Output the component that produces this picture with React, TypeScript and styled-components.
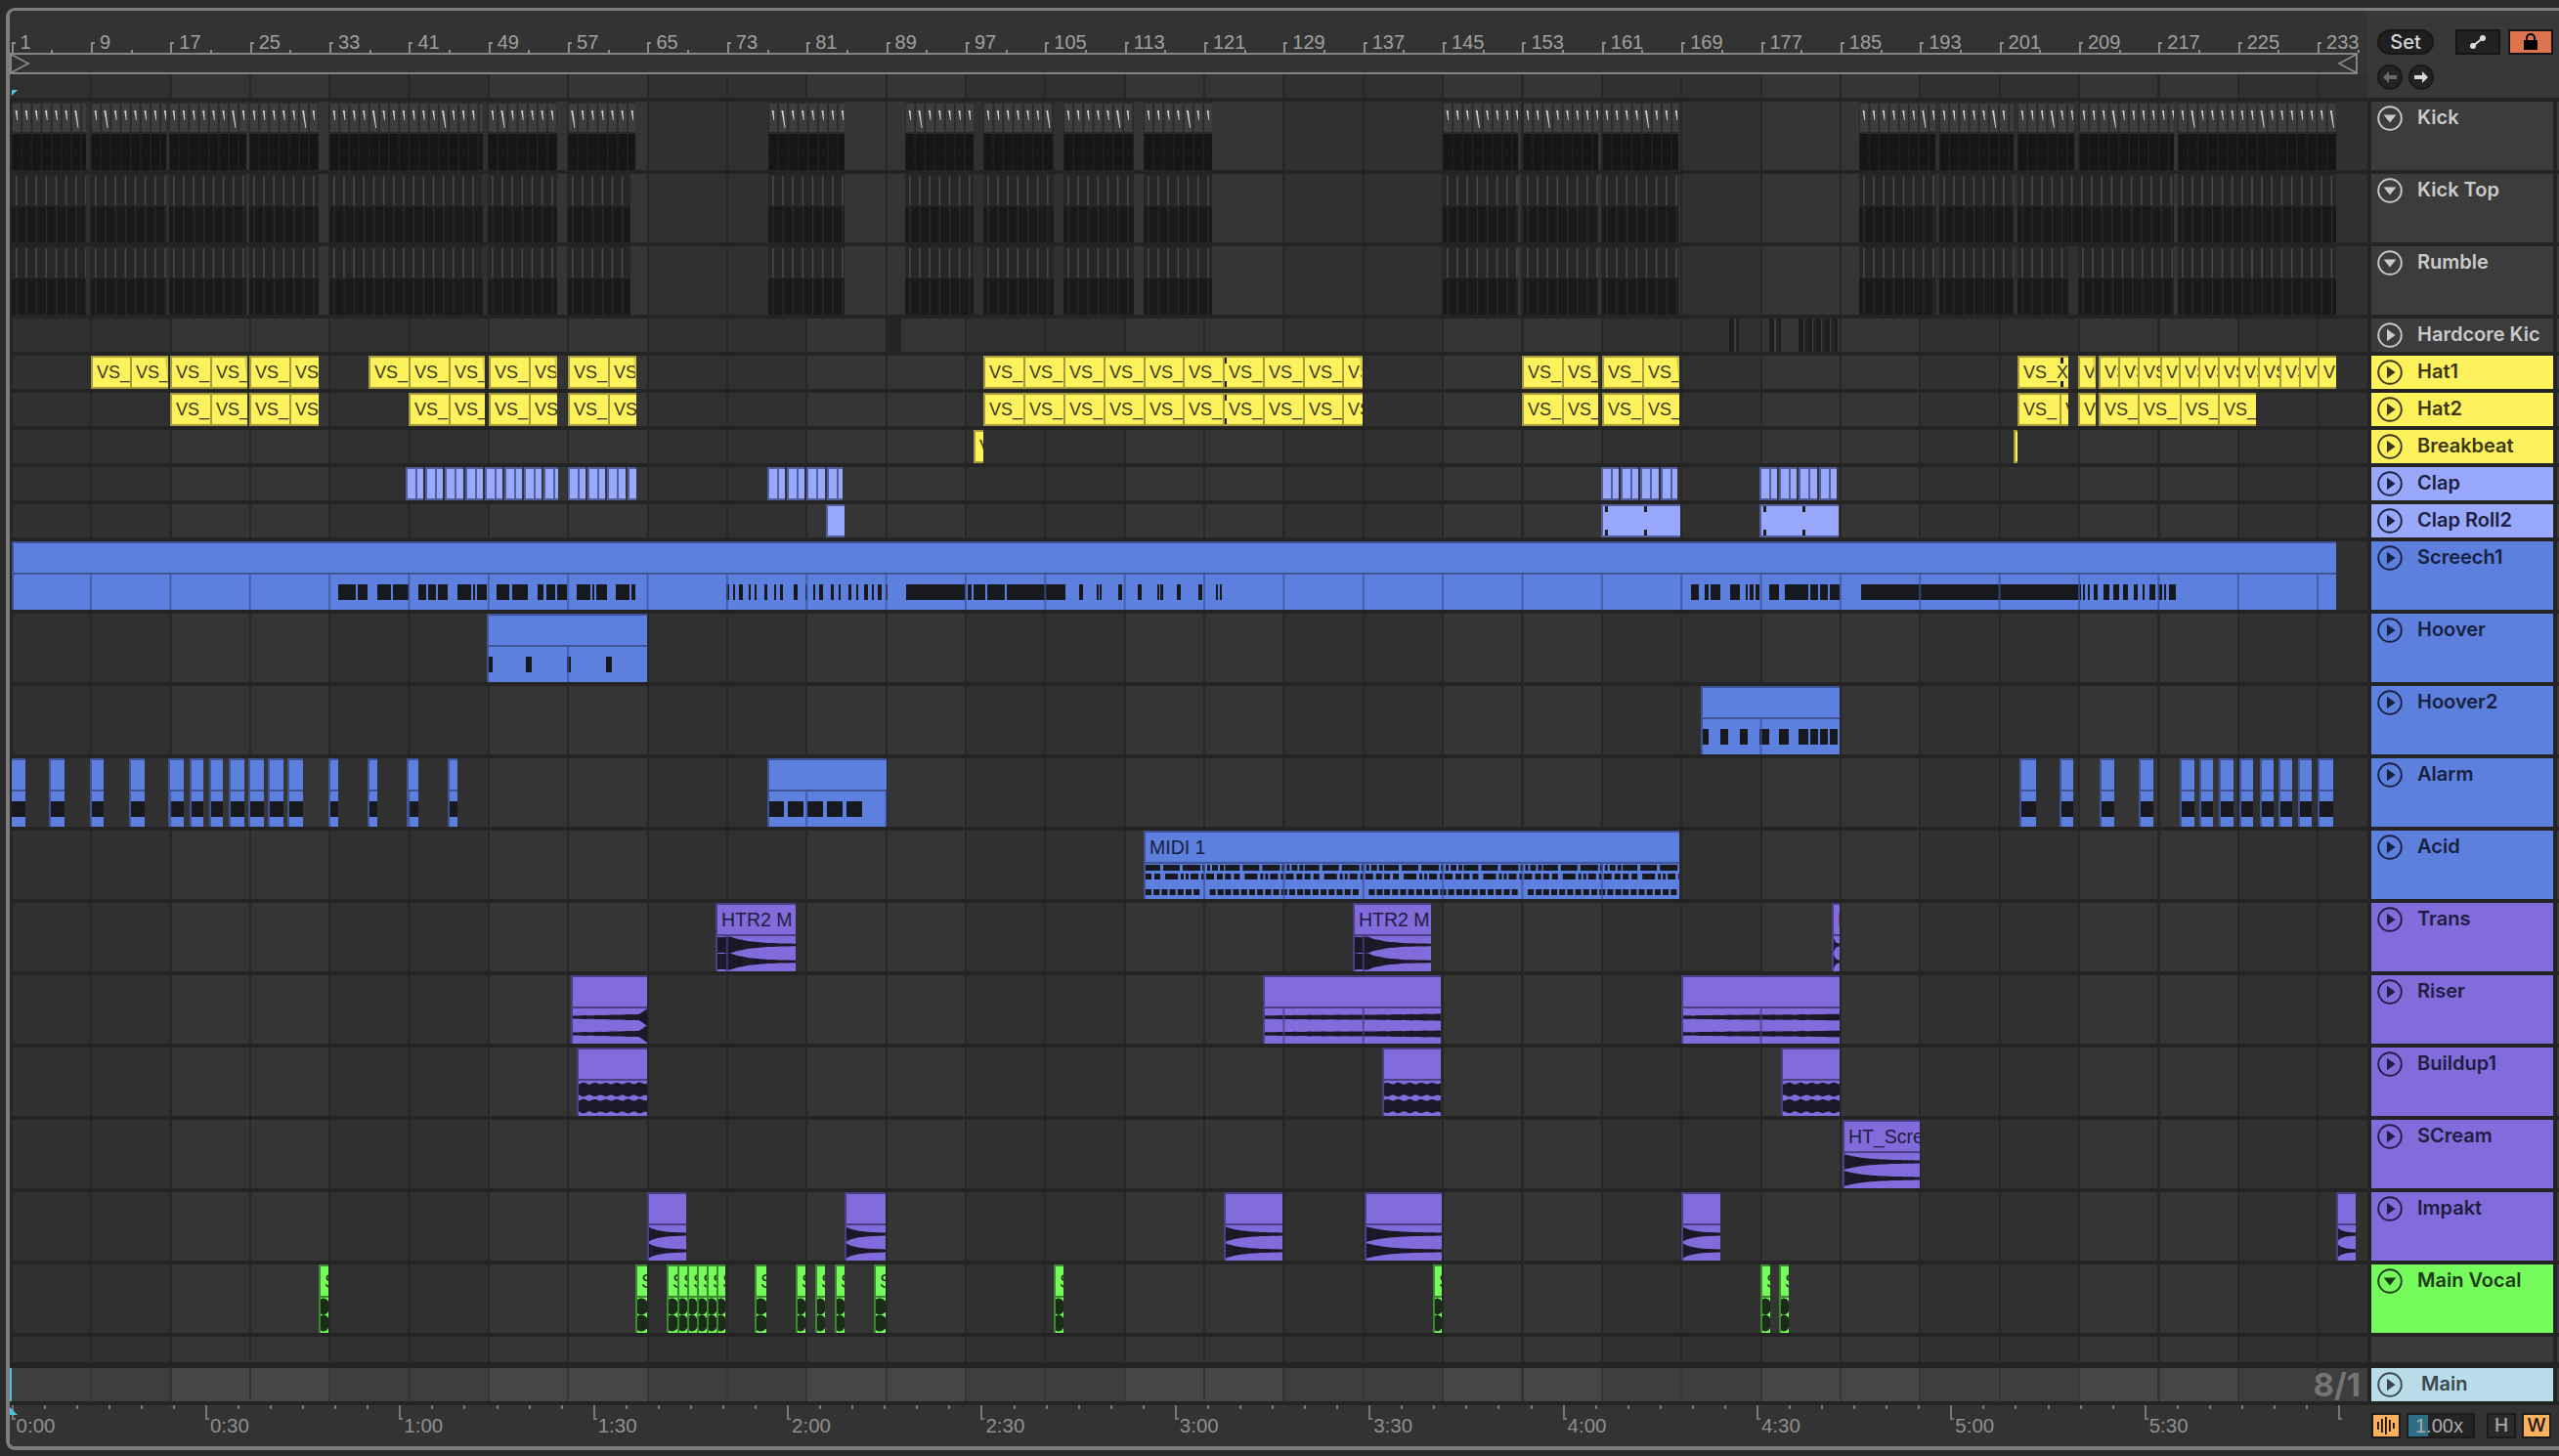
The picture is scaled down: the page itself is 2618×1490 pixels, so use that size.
import React from "react";
import styled, { createGlobalStyle } from "styled-components";

const GlobalStyle = createGlobalStyle`
    html, body {
        margin: 0;
        padding: 0;
        background: #2a2a2a;
        overflow: hidden;
    }
`;

/* ---------- palette ---------- */

type Tone = "yellow" | "clap" | "blue" | "purple" | "green";

const tones: Record<Tone, { fill: string; edge: string; ink: string; wave: string }> = {
    yellow: { fill: "#fdf15c", edge: "#a39b3c", ink: "#3a3813", wave: "#26240c" },
    clap: { fill: "#98a8fb", edge: "#535e9c", ink: "#1d2040", wave: "#1b1c26" },
    blue: { fill: "#5d7fde", edge: "#3e5497", ink: "#18203f", wave: "#18191f" },
    purple: { fill: "#826cdb", edge: "#4b3f87", ink: "#211c42", wave: "#1b1828" },
    green: { fill: "#75fc5c", edge: "#3b8a30", ink: "#1c3a16", wave: "#1a2b17" },
};

const GRID = 81.36;
const LANE_X = 12;
const UI = `"Liberation Sans", Arial, sans-serif`;
const HEAD = `Inter, "Liberation Sans", sans-serif`;

/* ---------- frame ---------- */

const Frame = styled.div`
    box-sizing: content-box;
    margin: 8px 0 0 6px;
    width: 2608px;
    height: 1469px;
    border-left: 4px solid #7d7d7d;
    border-top: 3px solid #7d7d7d;
    border-bottom: 4px solid #7d7d7d;
    border-radius: 9px 0 0 9px;
    background: #242424;
    overflow: hidden;
    display: flex;
    flex-direction: column;
    gap: 4px;
`;

const Row = styled.div<{ $h: number; $push?: number }>`
    display: flex;
    gap: 4px;
    height: ${(p) => p.$h}px;
    margin-top: ${(p) => p.$push || 0}px;
    padding-left: 2px;
    flex: none;
`;

const Lane = styled.div<{ $main?: boolean }>`
    position: relative;
    width: 2410px;
    flex: none;
    overflow: hidden;
    background:
        repeating-linear-gradient(
            90deg,
            ${(p) => (p.$main ? "#363636" : "#272727")} 0 0.8px,
            transparent 0.8px 80px,
            ${(p) => (p.$main ? "#363636" : "#272727")} 80px ${GRID}px
        ),
        repeating-linear-gradient(
            90deg,
            ${(p) => (p.$main ? "#3e3e3e" : "#303030")} 0 ${GRID * 2}px,
            ${(p) => (p.$main ? "#464646" : "#353535")} ${GRID * 2}px ${GRID * 4}px
        );
    ${(p) => p.$main && "box-shadow: -2px 0 0 #4fc3dc;"}
`;

const TrackHead = styled.div<{ $bg?: string; $ink?: string }>`
    width: 186px;
    flex: none;
    box-sizing: border-box;
    padding: 4px 0 0 6px;
    background: ${(p) => p.$bg || "#3c3c3c"};
    color: ${(p) => p.$ink || "#cbcbcb"};
    display: flex;
    align-items: flex-start;
    gap: 15px;
`;

const TrackName = styled.span<{ $shift?: boolean }>`
    font: 600 20px/25px ${HEAD};
    white-space: nowrap;
    overflow: hidden;
    margin-left: ${(p) => (p.$shift ? 4 : 0)}px;
`;

const Sliver = styled.div`
    width: 2px;
    flex: none;
    background: #3a3a3a;
`;

/* ---------- top bar ---------- */

const TopRow = styled.div`
    display: flex;
    height: 89px;
    flex: none;
    background: #333333;
`;

const Overview = styled.div`
    width: 2412px;
    flex: none;
    display: flex;
    flex-direction: column;
    overflow: hidden;
`;

const Ruler = styled.div`
    display: flex;
    height: 43px;
    flex: none;
    padding-left: 1.6px;
    overflow: hidden;
`;

const BarCell = styled.div`
    position: relative;
    width: ${GRID}px;
    flex: none;
    box-sizing: border-box;
    padding: 20px 0 0 9px;
    font: 400 20px/24px ${UI};
    color: #a0a0a0;
    &::before {
        content: "";
        position: absolute;
        left: 0;
        bottom: 0;
        width: 4px;
        height: 11px;
        border-left: 2px solid #8c8c8c;
        border-top: 2px solid #8c8c8c;
        box-sizing: border-box;
    }
    &::after {
        content: "";
        position: absolute;
        left: 40.7px;
        bottom: 0;
        width: 2px;
        height: 3px;
        background: #8c8c8c;
    }
`;

const Brace = styled.div`
    position: relative;
    height: 18px;
    margin-right: 10px;
    flex: none;
    box-sizing: content-box;
    border: 2px solid #858585;
`;

const BraceMark = styled.svg<{ $side: "left" | "right" }>`
    position: absolute;
    top: -1px;
    ${(p) => p.$side}: -1px;
`;

const TickLane = styled(Lane)`
    flex: 1;
    margin-left: 2px;
`;

const Marker = styled.svg<{ $bottom?: boolean }>`
    position: absolute;
    left: -2px;
    ${(p) => (p.$bottom ? "top: 2px;" : "bottom: 0;")}
`;

const Controls = styled.div`
    flex: 1;
    box-sizing: border-box;
    padding: 19px 0 0 10px;
    background: #383838;
    display: flex;
    flex-direction: column;
    gap: 10px;
`;

const ControlLine = styled.div`
    display: flex;
    align-items: center;
`;

const SetButton = styled.div`
    width: 58px;
    height: 26px;
    box-sizing: border-box;
    border-radius: 13px;
    background: #1f1f1f;
    border: 2px solid #171717;
    color: #d6d6d6;
    font: 500 20px/22px ${HEAD};
    text-align: center;
    margin-right: 22px;
`;

const SquareButton = styled.div<{ $bg: string }>`
    width: 46px;
    height: 26px;
    box-sizing: border-box;
    background: ${(p) => p.$bg};
    border: 2px solid #151515;
    display: flex;
    align-items: center;
    justify-content: center;
    margin-right: 8px;
`;

const RoundButton = styled.div`
    width: 26px;
    height: 26px;
    box-sizing: border-box;
    border-radius: 50%;
    background: #242424;
    border: 2px solid #191919;
    display: flex;
    align-items: center;
    justify-content: center;
    margin-right: 6px;
`;

/* ---------- clips ---------- */

const ClipBox = styled.div<{ $tone: Tone; $closed?: boolean }>`
    position: absolute;
    top: 0;
    height: 100%;
    box-sizing: border-box;
    overflow: hidden;
    background: ${(p) => tones[p.$tone].fill};
    color: ${(p) => tones[p.$tone].ink};
    border-left: 2px solid ${(p) => tones[p.$tone].edge};
    border-top: 2px solid ${(p) => tones[p.$tone].edge};
    border-bottom: ${(p) => (p.$closed ? `2px solid ${tones[p.$tone].edge}` : "none")};
    display: flex;
    flex-direction: column;
`;

const ClipTitle = styled.div<{ $tone: Tone }>`
    height: 30px;
    flex: none;
    padding-left: 4px;
    font: 400 ${(p) => (p.$tone === "yellow" ? 18 : 19.5)}px/30px ${UI};
    white-space: nowrap;
    box-sizing: border-box;
`;

const ClipRule = styled.div<{ $tone: Tone }>`
    height: 2px;
    flex: none;
    background: ${(p) => tones[p.$tone].edge};
`;

const ClipBody = styled.svg`
    display: block;
    flex: 1;
    width: 100%;
    min-height: 0;
`;

const Fold = styled.div`
    position: absolute;
    top: 0;
    right: 0;
    bottom: 0;
    width: 7px;
    background: #d4ca4e;
    clip-path: polygon(100% 0, 100% 100%, 60% 0);
`;

const Notch = styled.div<{ $at: "top" | "bottom" }>`
    position: absolute;
    ${(p) => p.$at}: 0;
    width: 3px;
    height: 6px;
    background: #1f1f1c;
`;

const InnerRule = styled.div<{ $tone: Tone }>`
    position: absolute;
    top: 0;
    bottom: 0;
    width: 2px;
    background: ${(p) => tones[p.$tone].edge};
`;

const Ghost = styled.div<{ $striped?: boolean }>`
    position: absolute;
    top: 0;
    height: 100%;
    background: ${(p) =>
        p.$striped
            ? "repeating-linear-gradient(90deg, #1f1f1f 0 5px, #3e3e3e 5px 6.5px, #262626 6.5px 9px)"
            : "#242424"};
`;

const DrumSvg = styled.svg`
    position: absolute;
    top: 0;
    height: 100%;
    display: block;
`;

const Overlay = styled.div`
    position: absolute;
    right: 7px;
    top: 0;
    font: 700 33px/34px ${HEAD};
    color: #757575;
`;

/* ---------- bottom bar ---------- */

const BottomRow = styled.div`
    display: flex;
    height: 42px;
    flex: none;
    background: #333333;
`;

const TimeRuler = styled.div`
    width: 2412px;
    flex: none;
    display: flex;
    padding-left: 1.6px;
    box-sizing: border-box;
    overflow: hidden;
    position: relative;
`;

const TimeCell = styled.div<{ $major?: boolean }>`
    position: relative;
    width: 33.07px;
    flex: none;
    font: 400 20.5px/24px ${UI};
    color: #8f8f8f;
    white-space: nowrap;
    padding-top: 9px;
    box-sizing: border-box;
    &::before {
        content: "";
        position: absolute;
        left: 0;
        top: 0;
        box-sizing: border-box;
        width: ${(p) => (p.$major ? 4 : 2)}px;
        height: ${(p) => (p.$major ? 15 : 4)}px;
        border-left: 2px solid #777;
        border-bottom: ${(p) => (p.$major ? "2px solid #777" : "none")};
    }
`;

const TimeLabel = styled.span`
    padding-left: 5px;
`;

const BottomTools = styled.div`
    flex: 1;
    display: flex;
    padding: 8px 0 0 4px;
    box-sizing: border-box;
    background: #333333;
`;

const ToolButton = styled.div<{ $on?: boolean; $gap: number }>`
    width: 30px;
    height: 26px;
    box-sizing: border-box;
    border: 2px solid #1b1b1b;
    background: ${(p) => (p.$on ? "#fab15e" : "#2b2b2b")};
    color: ${(p) => (p.$on ? "#1b1208" : "#a8a8a8")};
    font: 500 19px/22px ${HEAD};
    text-align: center;
    margin-right: ${(p) => p.$gap}px;
    display: flex;
    align-items: center;
    justify-content: center;
`;

const SpeedField = styled.div`
    position: relative;
    width: 70px;
    height: 26px;
    box-sizing: border-box;
    border: 2px solid #1b1b1b;
    background: linear-gradient(90deg, #2e6f86 0 20px, #242424 20px);
    color: #adadad;
    font: 400 20px/22px ${UI};
    padding-left: 7px;
    margin-right: 12px;
`;

/* ---------- drawn bits ---------- */

const HeadIcon = ({ open, color }: { open: boolean; color: string }) => (
    <svg width="26" height="26" viewBox="0 0 26 26" style={{ flex: "none" }}>
        <circle cx="13" cy="13" r="11.8" fill="none" stroke={color} strokeWidth="1.9" />
        {open ? (
            <polygon points="6.6,9.6 19.4,9.6 13,17.6" fill={color} />
        ) : (
            <polygon points="10,6.8 18.6,13 10,19.2" fill={color} />
        )}
    </svg>
);

const noise = (n: number) => Math.sin(n * 12.9898) * 0.5 + Math.sin(n * 4.1414) * 0.5;

const channel = (x0: number, x1: number, cy: number, amp: (t: number, x: number) => number) => {
    let up = "";
    let down = "";
    for (let x = x0; x <= x1 + 1; x += 1.5) {
        const a = Math.max(0.4, amp((x - x0) / (x1 - x0), x));
        up += `${up ? "L" : "M"}${x.toFixed(1)} ${(cy - a).toFixed(1)}`;
        down = `L${x.toFixed(1)} ${(cy + a).toFixed(1)}` + down;
    }
    return up + down + "Z";
};

type Shape =
    | { kind: "slabs"; items: number[][] }
    | { kind: "midi" }
    | { kind: "env"; amp: (t: number, x: number) => number };

const acidRows = (x0: number, x1: number) => {
    const rects: number[][] = [];
    for (let b = 0; b * GRID + 1170 < x1; b++) {
        const o = 1172 + b * GRID;
        const r1 = [[0, 15], [18, 17], [38, 18], [58, 3], [63, 3], [68, 6], [76, 4]];
        r1.forEach(([a, w]) => rects.push([o + a, 1, w]));
        const r2 = [[0, 6], [9, 6], [20, 13], [36, 3], [41, 3], [46, 8], [57, 3], [62, 8], [73, 6]];
        r2.forEach(([a, w]) => rects.push([o + a, 10, w]));
        for (let i = 0; i < 10; i++) {
            if (i === 7 && b % 2 === 0) continue;
            rects.push([o + i * 8.2, 26, 6]);
        }
    }
    return rects.filter((r) => r[0] < x1 && r[0] >= x0);
};

const Wave = ({ x0, x1, tone, shape }: { x0: number; x1: number; tone: Tone; shape: Shape }) => {
    const c = tones[tone];
    const lines: number[] = [];
    for (let k = 0; k < 30; k++) {
        const gx = 93 + GRID * k;
        if (gx > x0 + 2 && gx < x1) lines.push(gx);
    }
    return (
        <ClipBody viewBox={`${x0 + 2} 0 ${x1 - x0 - 2} 36`} preserveAspectRatio="none">
            {shape.kind === "slabs" &&
                shape.items.map(([a, b], i) => (
                    <rect key={i} x={a} y="10" width={b - a} height="16" fill={c.wave} />
                ))}
            {shape.kind === "midi" &&
                acidRows(x0, x1).map(([x, y, w], i) => (
                    <rect key={i} x={x} y={y} width={w} height="6" fill={c.wave} />
                ))}
            {shape.kind === "env" && (
                <>
                    <path d={channel(x0, x1, 9, shape.amp)} fill={c.wave} />
                    <path d={channel(x0, x1, 26, shape.amp)} fill={c.wave} />
                </>
            )}
            {lines.map((gx) => (
                <rect key={gx} x={gx - 1} y="0" width="2" height="36" fill={c.edge} opacity="0.75" />
            ))}
        </ClipBody>
    );
};

const Clip = ({ x0, x1, tone, title, shape, closed, fold, children }: {
    x0: number;
    x1: number;
    tone: Tone;
    title?: string;
    shape?: Shape;
    closed?: boolean;
    fold?: boolean;
    children?: React.ReactNode;
}) => (
    <ClipBox $tone={tone} $closed={closed} style={{ left: x0 - LANE_X, width: x1 - x0 }}>
        <ClipTitle $tone={tone}>{title}</ClipTitle>
        {shape && <ClipRule $tone={tone} />}
        {shape && <Wave x0={x0} x1={x1} tone={tone} shape={shape} />}
        {fold && <Fold />}
        {children}
    </ClipBox>
);

const DrumClip = ({ x0, x1, kick }: { x0: number; x1: number; kick: boolean }) => {
    const cells: React.ReactNode[] = [];
    let k = 0;
    const w = x1 - x0;
    for (let x = 1; x < w; x += 10.17, k++) {
        const cw = Math.min(8.2, w - x);
        const long = (Math.round(x0) + k * 5) % 7 === 0;
        cells.push(
            kick ? (
                <g key={k}>
                    <rect x={x} y="2" width={cw} height="29" fill="#3d3d3d" />
                    <rect x={x} y="33" width={cw} height="37" fill="#161616" />
                    <rect x={x + 2} y="50" width={Math.max(0, cw - 4)} height="2" fill="#1d1d1d" />
                    {x + 4 < w && (
                        <polygon
                            points={
                                long
                                    ? `${x + 2.2},9 ${x + 4.2},9 ${x + 6.4},27 ${x + 5.6},27`
                                    : `${x + 2.6},9 ${x + 4.6},9 ${x + 5.1},19 ${x + 4.4},19`
                            }
                            fill="#d2d2d2"
                        />
                    )}
                </g>
            ) : (
                <g key={k}>
                    <rect x={x + 3} y="2" width="1.6" height="30" fill="#494949" />
                    <rect x={x - 1} y="34" width={Math.min(5, w - x)} height="36" fill="#1a1a1a" />
                    <rect x={x + 5.5} y="34" width={Math.min(4.5, Math.max(0, w - x - 5.5))} height="36" fill="#1a1a1a" />
                    <rect x={x + 3.4} y="34" width="0.9" height="36" fill="#2e2e2e" />
                </g>
            ),
        );
    }
    return (
        <DrumSvg style={{ left: x0 - LANE_X, width: w }} viewBox={`0 0 ${w} 70`} preserveAspectRatio="none">
            <rect x="0" y="0" width={w} height="33" fill={kick ? "#2a2a2a" : "#272727"} />
            <rect x="0" y="33" width={w} height="37" fill="#1f1f1f" />
            {cells}
        </DrumSvg>
    );
};

/* ---------- track data ---------- */

// groups of abutting clips: list of starts, last number is where the group ends
const VS_GROUPS_1 = [
    [93, 133, 172], [174, 215, 253], [255, 296, 326], [377, 418, 459, 496], [500, 541, 570], [581, 622, 651],
    [1006, 1047, 1088, 1129, 1170, 1210, 1251, 1292, 1333, 1373, 1394],
    [1557, 1598, 1635], [1639, 1680, 1718],
];
const VS_GROUPS_2 = [
    [174, 215, 253], [255, 296, 326], [418, 459, 496], [500, 541, 570], [581, 622, 651],
    [1006, 1047, 1088, 1129, 1170, 1210, 1251, 1292, 1333, 1373, 1394],
    [1557, 1598, 1635], [1639, 1680, 1718],
    [2064, 2107, 2116], [2126, 2144], [2147, 2187, 2230, 2269, 2308],
];

const HatClips = ({ groups, folds }: { groups: number[][]; folds?: boolean }) => (
    <>
        {groups.map((g) =>
            g.slice(0, -1).map((x, i) => (
                <Clip
                    key={x}
                    x0={x}
                    x1={g[i + 1]}
                    tone="yellow"
                    title="VS_"
                    closed
                    fold={folds && i === g.length - 2 && x !== 296}
                >
                    {x === 1251 && <Notch $at="top" style={{ left: -1 }} />}
                    {x === 1251 && <Notch $at="bottom" style={{ left: -1 }} />}
                </Clip>
            )),
        )}
    </>
);

const CLAP_GROUPS = [[415, 571], [581, 651], [785, 862], [1638, 1716], [1800, 1880]];

const ClapClips = () => (
    <>
        {CLAP_GROUPS.map(([a, b]) => {
            const items = [];
            for (let x = a; x < b - 2; x += 20.2) items.push(x);
            return items.map((x) => (
                <Clip key={x} x0={x} x1={Math.min(x + 18.2, b)} tone="clap" closed>
                    <InnerRule $tone="clap" style={{ left: 8 }} />
                </Clip>
            ));
        })}
    </>
);

const SCREECH_SLABS = [
    [346, 364], [366, 376], [386, 400], [402, 418], [428, 436], [438, 446], [448, 458], [468, 482], [484, 486],
    [488, 498], [508, 521], [524, 540], [550, 556], [559, 568], [570, 580], [590, 604], [606, 608], [610, 621],
    [630, 644], [646, 650],
    [743, 746], [750, 752], [756, 760], [766, 768], [772, 774], [782, 785], [792, 794], [798, 801], [812, 816],
    [824, 826], [832, 834], [838, 842], [850, 853], [858, 860], [868, 871], [876, 878], [884, 888], [892, 894],
    [898, 902], [906, 908],
    [927, 988], [990, 994], [996, 1008], [1010, 1028], [1030, 1090], [1104, 1108], [1122, 1124], [1125, 1127],
    [1144, 1148], [1164, 1168], [1184, 1186], [1187, 1190], [1204, 1208], [1226, 1230], [1244, 1246], [1248, 1250],
    [1730, 1738], [1744, 1748], [1750, 1760], [1770, 1780], [1786, 1788], [1790, 1794], [1796, 1800],
    [1810, 1820], [1826, 1850], [1852, 1860], [1862, 1870], [1872, 1882],
    [1904, 2129], [2131, 2133], [2136, 2138], [2142, 2146], [2152, 2158], [2162, 2168], [2172, 2177], [2183, 2187],
    [2192, 2194], [2199, 2205], [2208, 2212], [2214, 2216], [2219, 2226],
];

const HOOVER_SLABS = [[500, 504], [538, 544], [580, 584], [620, 626]];
const HOOVER2_SLABS = [
    [1742, 1748], [1760, 1768], [1780, 1788], [1800, 1810], [1820, 1830], [1840, 1850], [1852, 1860], [1862, 1870],
    [1872, 1880],
];

const ALARM_CLIPS = [
    [10, 26], [50, 66], [92, 106], [132, 148], [172, 188], [194, 208], [214, 228], [234, 250], [254, 270], [274, 290],
    [294, 310], [336, 346], [376, 386], [416, 428], [458, 468],
    [2066, 2083], [2107, 2121], [2148, 2163], [2188, 2203], [2230, 2245], [2250, 2264], [2270, 2285], [2291, 2305],
    [2312, 2326], [2331, 2345], [2351, 2365], [2371, 2387],
];

const decay = (t: number) => 1.4 + 7 * Math.exp(-3.6 * t);
const hit = (t: number, x: number) => (t < 0.2 ? 8 + noise(x) * 0.6 : 1.2 + 6.8 * Math.exp(-4.5 * (t - 0.2)) + noise(x) * 0.25);
const swell = (t: number, x: number) => 6.4 + Math.sin(x * 0.55) * 0.9 + noise(x) * 0.3;
const thin = (t: number, x: number) => 1.7 + t * 1.6 + noise(x) * 0.25;
const rising = (t: number, x: number) => 1.6 + 1.6 * t + (t > 0.9 ? (t - 0.9) * 55 : 0) + noise(x) * 0.25;
const vocal = (t: number) => 8.4 * Math.pow(Math.max(0.02, Math.sin(Math.PI * (0.08 + t * 0.84))), 0.35);

const VOCAL_CLIPS = [
    [326, 336], [650, 662], [682, 693], [693, 703], [703, 713], [713, 723], [723, 733], [733, 742], [772, 784],
    [814, 824], [834, 844], [854, 864], [894, 906], [1078, 1088], [1466, 1475], [1801, 1811], [1820, 1830],
];

const Bar = ({ label }: { label: number }) => <BarCell>{label}</BarCell>;

const drumRanges = {
    kick: [
        [12, 88], [93, 170], [173, 252], [255, 326], [337, 494], [499, 570], [581, 650], [786, 864], [926, 996],
        [1006, 1078], [1088, 1160], [1170, 1240], [1476, 1553], [1558, 1635], [1639, 1717], [1902, 1980],
        [1984, 2060], [2064, 2122], [2127, 2224], [2228, 2390],
    ],
    top: [
        [12, 88], [93, 170], [173, 252], [255, 326], [337, 494], [499, 570], [581, 645], [786, 864], [926, 996],
        [1006, 1078], [1088, 1160], [1170, 1240], [1476, 1553], [1558, 1635], [1639, 1717], [1902, 1980],
        [1984, 2060], [2064, 2224], [2228, 2390],
    ],
    rumble: [
        [12, 88], [93, 170], [173, 252], [255, 326], [337, 494], [499, 570], [581, 645], [786, 864], [926, 996],
        [1006, 1078], [1088, 1160], [1170, 1240], [1476, 1553], [1558, 1635], [1639, 1717], [1902, 1980],
        [1984, 2060], [2064, 2116], [2126, 2224], [2228, 2390],
    ],
};

const Drums = ({ ranges, kick }: { ranges: number[][]; kick: boolean }) => (
    <>
        {ranges.map(([a, b]) => (
            <DrumClip key={a} x0={a} x1={b} kick={kick} />
        ))}
    </>
);

const Track = ({ name, h, tone, open, children, bg, ink, push }: {
    name?: string;
    h: number;
    tone?: Tone;
    open?: boolean;
    children?: React.ReactNode;
    bg?: string;
    ink?: string;
    push?: number;
}) => {
    const fill = bg || (tone ? tones[tone].fill : undefined);
    const text = ink || (tone ? tones[tone].ink : undefined);
    return (
        <Row $h={h} $push={push}>
            <Lane>{children}</Lane>
            <TrackHead $bg={fill} $ink={text}>
                {name && <HeadIcon open={!!open} color={text || "#cbcbcb"} />}
                {name && <TrackName>{name}</TrackName>}
            </TrackHead>
            <Sliver />
        </Row>
    );
};

const bars = Array.from({ length: 30 }, (_, i) => 1 + i * 8);
const times = Array.from({ length: 73 }, (_, i) => i);
const timeText = (i: number) => {
    const s = i * 5;
    return `${Math.floor(s / 60)}:${String(s % 60).padStart(2, "0")}`;
};

const purple = (x0: number, x1: number, amp: (t: number, x: number) => number, title?: string) => (
    <Clip key={x0} x0={x0} x1={x1} tone="purple" title={title} shape={{ kind: "env", amp }} />
);

export default function App() {
    return (
        <>
            <GlobalStyle />
            <Frame>
                <TopRow>
                    <Overview>
                        <Ruler>
                            {bars.map((b) => (
                                <Bar key={b} label={b} />
                            ))}
                        </Ruler>
                        <Brace>
                            <BraceMark $side="left" width="20" height="20" viewBox="0 0 20 20">
                                <path d="M1 1 L18 10 L1 19" fill="none" stroke="#8a8a8a" strokeWidth="1.6" />
                            </BraceMark>
                            <BraceMark $side="right" width="20" height="20" viewBox="0 0 20 20">
                                <path d="M19 1 L2 10 L19 19" fill="none" stroke="#8a8a8a" strokeWidth="1.6" />
                            </BraceMark>
                        </Brace>
                        <TickLane>
                            <Marker width="8" height="8" viewBox="0 0 8 8">
                                <polygon points="0,0 8,0 0,8" fill="#4fc3dc" />
                            </Marker>
                        </TickLane>
                    </Overview>
                    <Controls>
                        <ControlLine>
                            <SetButton>Set</SetButton>
                            <SquareButton $bg="#222222">
                                <svg width="18" height="16" viewBox="0 0 18 16">
                                    <line x1="4" y1="12" x2="14" y2="4" stroke="#dcdcdc" strokeWidth="2" />
                                    <circle cx="4" cy="12" r="3" fill="#dcdcdc" />
                                    <circle cx="14" cy="4" r="3" fill="#dcdcdc" />
                                </svg>
                            </SquareButton>
                            <SquareButton $bg="#dd7350">
                                <svg width="16" height="18" viewBox="0 0 16 18">
                                    <path d="M4 8V5a4 4 0 0 1 8 0v3" fill="none" stroke="#000" strokeWidth="2" />
                                    <rect x="1" y="7" width="14" height="10" fill="#000" />
                                </svg>
                            </SquareButton>
                        </ControlLine>
                        <ControlLine>
                            <RoundButton>
                                <svg width="16" height="14" viewBox="0 0 16 14">
                                    <path d="M1 7 L7 1 V5 H15 V9 H7 V13 Z" fill="#6a6a6a" />
                                </svg>
                            </RoundButton>
                            <RoundButton>
                                <svg width="16" height="14" viewBox="0 0 16 14">
                                    <path d="M15 7 L9 1 V5 H1 V9 H9 V13 Z" fill="#d8d8d8" />
                                </svg>
                            </RoundButton>
                        </ControlLine>
                    </Controls>
                </TopRow>

                <Track name="Kick" h={70} open>
                    <Drums ranges={drumRanges.kick} kick />
                </Track>
                <Track name="Kick Top" h={70} open>
                    <Drums ranges={drumRanges.top} kick={false} />
                </Track>
                <Track name="Rumble" h={70} open>
                    <Drums ranges={drumRanges.rumble} kick={false} />
                </Track>
                <Track name="Hardcore Kic" h={34}>
                    <Ghost style={{ left: 906 - LANE_X, width: 16 }} />
                    <Ghost $striped style={{ left: 1769 - LANE_X, width: 10 }} />
                    <Ghost $striped style={{ left: 1810 - LANE_X, width: 12 }} />
                    <Ghost $striped style={{ left: 1840 - LANE_X, width: 40 }} />
                </Track>
                <Track name="Hat1" h={34} tone="yellow">
                    <HatClips groups={VS_GROUPS_1} folds />
                    <Clip x0={2064} x1={2116} tone="yellow" title="VS_X" closed>
                        <Notch $at="top" style={{ left: 42 }} />
                        <Notch $at="bottom" style={{ left: 42 }} />
                    </Clip>
                    <Clip x0={2126} x1={2144} tone="yellow" title="V" closed fold />
                    {[2147, 2167, 2187, 2210, 2229, 2249, 2269, 2290, 2310, 2332, 2352, 2371].map((x, i, all) => (
                        <Clip key={x} x0={x} x1={all[i + 1] || 2390} tone="yellow" title="VS_" closed />
                    ))}
                </Track>
                <Track name="Hat2" h={34} tone="yellow">
                    <HatClips groups={VS_GROUPS_2} />
                </Track>
                <Track name="Breakbeat" h={34} tone="yellow">
                    <Clip x0={996} x1={1006} tone="yellow" title="VS_" closed />
                    <Clip x0={2060} x1={2063.5} tone="yellow" closed />
                </Track>
                <Track name="Clap" h={34} tone="clap">
                    <ClapClips />
                </Track>
                <Track name="Clap Roll2" h={34} tone="clap">
                    <Clip x0={845} x1={864} tone="clap" closed />
                    {[1638, 1800].map((x) => (
                        <Clip key={x} x0={x} x1={x + 81} tone="clap" closed>
                            <Notch $at="top" style={{ left: 2 }} />
                            <Notch $at="bottom" style={{ left: 2 }} />
                            <Notch $at="top" style={{ left: 42 }} />
                            <Notch $at="bottom" style={{ left: 42 }} />
                        </Clip>
                    ))}
                </Track>
                <Track name="Screech1" h={70} tone="blue">
                    <Clip x0={12} x1={2390} tone="blue" shape={{ kind: "slabs", items: SCREECH_SLABS }} />
                </Track>
                <Track name="Hoover" h={70} tone="blue">
                    <Clip x0={498} x1={662} tone="blue" shape={{ kind: "slabs", items: HOOVER_SLABS }} />
                </Track>
                <Track name="Hoover2" h={70} tone="blue">
                    <Clip x0={1740} x1={1882} tone="blue" shape={{ kind: "slabs", items: HOOVER2_SLABS }} />
                </Track>
                <Track name="Alarm" h={70} tone="blue">
                    {ALARM_CLIPS.map(([a, b]) => (
                        <Clip key={a} x0={a} x1={b} tone="blue" shape={{ kind: "slabs", items: [[a, b]] }} />
                    ))}
                    <Clip
                        x0={785}
                        x1={907}
                        tone="blue"
                        shape={{ kind: "slabs", items: [[787, 802], [806, 822], [826, 842], [846, 862], [866, 882]] }}
                    />
                </Track>
                <Track name="Acid" h={70} tone="blue">
                    <Clip x0={1170} x1={1718} tone="blue" title="MIDI 1" shape={{ kind: "midi" }} />
                </Track>
                <Track name="Trans" h={70} tone="purple">
                    {purple(732, 814, hit, "HTR2 M")}
                    {purple(1384, 1464, hit, "HTR2 M")}
                    {purple(1874, 1882, hit, "HTR2 M")}
                </Track>
                <Track name="Riser" h={70} tone="purple">
                    {purple(584, 662, rising)}
                    {purple(1292, 1474, thin)}
                    {purple(1720, 1882, thin)}
                </Track>
                <Track name="Buildup1" h={70} tone="purple">
                    {purple(590, 662, swell)}
                    {purple(1414, 1474, swell)}
                    {purple(1822, 1882, swell)}
                </Track>
                <Track name="SCream" h={70} tone="purple">
                    {purple(1885, 1964, decay, "HT_Scre")}
                </Track>
                <Track name="Impakt" h={70} tone="purple">
                    {[[662, 702], [864, 906], [1252, 1312], [1396, 1475], [1720, 1760], [2390, 2410]].map(([a, b]) =>
                        purple(a, b, decay),
                    )}
                </Track>
                <Track name="Main Vocal" h={70} tone="green" open>
                    {VOCAL_CLIPS.map(([a, b]) => (
                        <Clip key={a} x0={a} x1={b} tone="green" title="S" shape={{ kind: "env", amp: vocal }} />
                    ))}
                </Track>
                <Track h={26} bg="#3a3a3a" />
                <Row $h={34} $push={2}>
                    <Lane $main>
                        <Overlay>8/1</Overlay>
                    </Lane>
                    <TrackHead $bg="#b8dce8" $ink="#3b474c">
                        <HeadIcon open={false} color="#3b474c" />
                        <TrackName $shift>Main</TrackName>
                    </TrackHead>
                    <Sliver />
                </Row>
                <BottomRow>
                    <TimeRuler>
                        {times.map((i) => (
                            <TimeCell key={i} $major={i % 6 === 0}>
                                {i % 6 === 0 && i < 72 && <TimeLabel>{timeText(i)}</TimeLabel>}
                            </TimeCell>
                        ))}
                        <Marker $bottom width="8" height="8" viewBox="0 0 8 8" style={{ left: 0 }}>
                            <polygon points="0,0 8,8 0,8" fill="#4fc3dc" />
                        </Marker>
                    </TimeRuler>
                    <BottomTools>
                        <ToolButton $on $gap={6}>
                            <svg width="22" height="18" viewBox="0 0 22 18">
                                {[[2, 4], [6, 7], [10, 9], [14, 6], [18, 3]].map(([x, a]) => (
                                    <rect key={x} x={x} y={9 - a} width="1.8" height={a * 2} fill="#1b1208" />
                                ))}
                            </svg>
                        </ToolButton>
                        <SpeedField>1.00x</SpeedField>
                        <ToolButton $gap={6}>H</ToolButton>
                        <ToolButton $on $gap={0}>W</ToolButton>
                    </BottomTools>
                </BottomRow>
            </Frame>
        </>
    );
}
